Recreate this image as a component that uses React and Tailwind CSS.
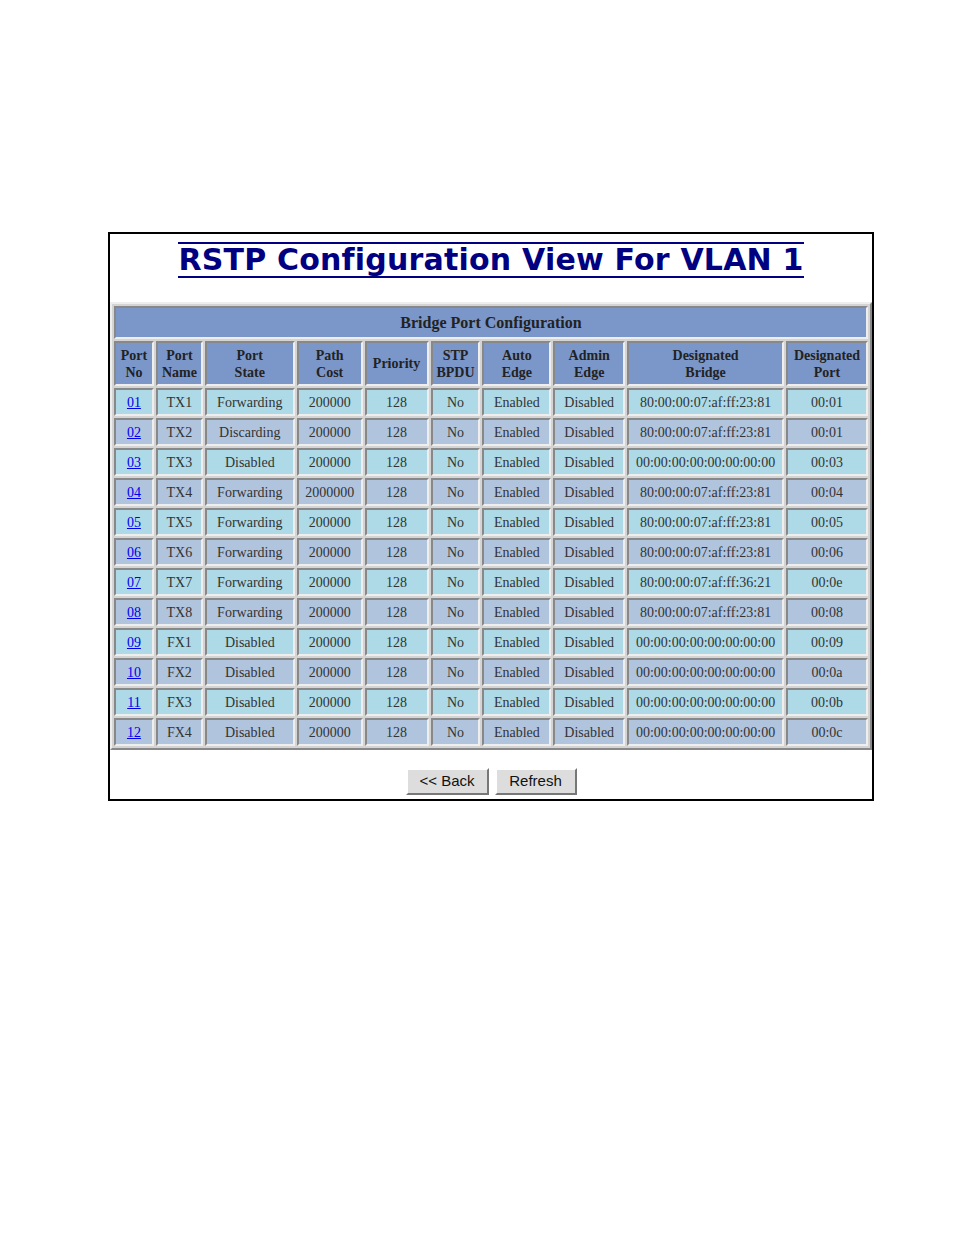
export default function App() {
  const rows = [
    ["01","TX1","Forwarding","200000","80:00:00:07:af:ff:23:81","00:01"],
    ["02","TX2","Discarding","200000","80:00:00:07:af:ff:23:81","00:01"],
    ["03","TX3","Disabled","200000","00:00:00:00:00:00:00:00","00:03"],
    ["04","TX4","Forwarding","2000000","80:00:00:07:af:ff:23:81","00:04"],
    ["05","TX5","Forwarding","200000","80:00:00:07:af:ff:23:81","00:05"],
    ["06","TX6","Forwarding","200000","80:00:00:07:af:ff:23:81","00:06"],
    ["07","TX7","Forwarding","200000","80:00:00:07:af:ff:36:21","00:0e"],
    ["08","TX8","Forwarding","200000","80:00:00:07:af:ff:23:81","00:08"],
    ["09","FX1","Disabled","200000","00:00:00:00:00:00:00:00","00:09"],
    ["10","FX2","Disabled","200000","00:00:00:00:00:00:00:00","00:0a"],
    ["11","FX3","Disabled","200000","00:00:00:00:00:00:00:00","00:0b"],
    ["12","FX4","Disabled","200000","00:00:00:00:00:00:00:00","00:0c"],
  ];
  const widths = [40,47,90,66,64,50,69,72,157,82];
  const heads = [["Port","No"],["Port","Name"],["Port","State"],["Path","Cost"],["Priority"],["STP","BPDU"],["Auto","Edge"],["Admin","Edge"],["Designated","Bridge"],["Designated","Port"]];
  const cell = "border-2 border-t-[#888] border-l-[#888] border-b-[#eee] border-r-[#eee] text-center p-0";
  return (
    <div className="w-[954px] h-[1235px] bg-white pt-[232px] pl-[108px]" style={{fontFamily:'"Liberation Serif", serif'}}>
      <div className="w-[766px] h-[569px] border-2 border-black flex flex-col items-center">
        <h1 className="mt-[8px] text-[30px] leading-[32px] font-bold text-[#000080] border-t-2 border-b-2 border-[#000080] h-[36px] px-0" style={{fontFamily:'"DejaVu Sans", Verdana, sans-serif', letterSpacing:'0.2px'}}>RSTP Configuration View For VLAN 1</h1>
        <table className="mt-[24px] border-separate border-spacing-[2px] border-2 border-t-[#eee] border-l-[#eee] border-b-[#888] border-r-[#888] bg-[#d4d4d4] text-[14px]">
          <tbody>
            <tr><td colSpan={10} className={cell + " bg-[#7b96c8] h-[33px] font-bold text-[16px] text-[#222]"}>Bridge Port Configuration</td></tr>
            <tr>
              {heads.map((h,i)=>(
                <td key={i} style={{width:widths[i]}} className={cell + " bg-[#7b96c8] h-[45px] font-bold text-[14px] leading-[17px] text-[#222]"}>{h.map((l,j)=><div key={j}>{l}</div>)}</td>
              ))}
            </tr>
            {rows.map((r,i)=>{
              const bg = i%2===0 ? "bg-[#addae6]" : "bg-[#b1c4de]";
              const vals=[r[0],r[1],r[2],r[3],"128","No","Enabled","Disabled",r[4],r[5]];
              return <tr key={i}>{vals.map((v,j)=>(
                <td key={j} className={cell+" "+bg+" h-[28px] text-[#333]"}>{j===0?<a href="#" className="text-[#0000ee] underline">{v}</a>:v}</td>
              ))}</tr>;
            })}
          </tbody>
        </table>
        <div className="mt-[18px] flex gap-[6px]" style={{fontFamily:'"Liberation Sans", Arial, sans-serif'}}>
          <button className="w-[83px] h-[27px] bg-[#ddd] text-[15px] text-[#111] border-2 border-t-[#fff] border-l-[#fff] border-b-[#777] border-r-[#777]">&lt;&lt; Back</button>
          <button className="w-[82px] h-[27px] bg-[#ddd] text-[15px] text-[#111] border-2 border-t-[#fff] border-l-[#fff] border-b-[#777] border-r-[#777]">Refresh</button>
        </div>
      </div>
    </div>
  );
}
